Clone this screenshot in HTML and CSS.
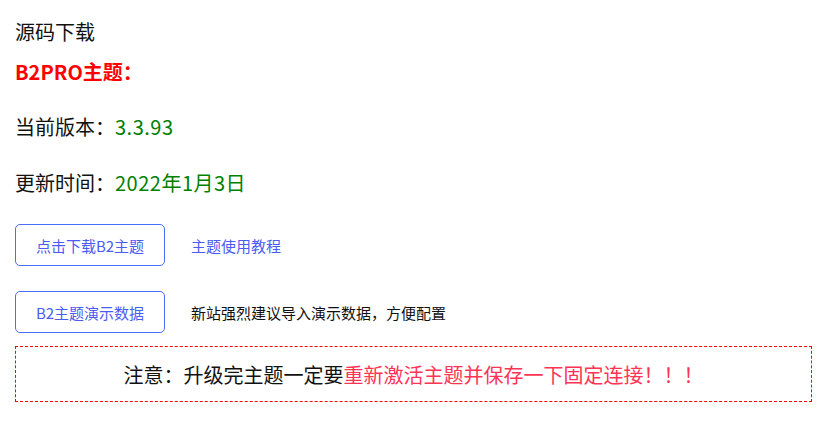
FILE: index.html
```html
<!DOCTYPE html>
<html lang="zh-CN">
<head>
    <meta charset="UTF-8">
    <meta name="viewport" content="width=device-width, initial-scale=1.0">
    <title>源码下载</title>
    <link rel="stylesheet" href="styles.css">
</head>
<body>
    <div class="content">
        <p class="title">源码下载</p>
        <h3 class="theme-name">B2PRO主题：</h3>
        <p class="info">当前版本：<span class="green">3.3.93</span></p>
        <p class="info">更新时间：<span class="green">2022年1月3日</span></p>

        <div class="row">
            <a class="btn" href="#">点击下载B2主题</a>
            <a class="link" href="#">主题使用教程</a>
        </div>
        <div class="row">
            <a class="btn" href="#">B2主题演示数据</a>
            <span class="tip">新站强烈建议导入演示数据，方便配置</span>
        </div>

        <div class="notice">注意：升级完主题一定要<span class="red">重新激活主题并保存一下固定连接！！！</span></div>
    </div>
</body>
</html>
```

FILE: styles.css
```css
body{
    margin: 0;
    font-family: "Noto Sans CJK SC", "Noto Sans", sans-serif;
    color: #111;
    background: #fff;
}
.content{
    padding: 17px 17px 0 15px;
}
.title{
    margin: 0;
    font-size: 20px;
    line-height: 30px;
}
.theme-name{
    margin: 10px 0 0 0;
    font-size: 20px;
    line-height: 30px;
    font-weight: bold;
    color: #ff0000;
}
.info{
    margin: 25px 0 0 0;
    font-size: 20px;
    line-height: 30px;
}
.info + .info{
    margin-top: 26px;
}
.green{
    color: #008000;
    letter-spacing: 0.5px;
}
.row{
    display: flex;
    align-items: center;
    gap: 26px;
    margin-top: 26px;
}
.row + .row{
    margin-top: 25px;
}
.btn{
    display: flex;
    align-items: center;
    justify-content: center;
    box-sizing: border-box;
    width: 150px;
    height: 42px;
    border: 1px solid #4a6cf7;
    border-radius: 5px;
    font-size: 15px;
    color: #4a5cf0;
    text-decoration: none;
}
.link{
    font-size: 15px;
    color: #4a5cf0;
    text-decoration: none;
}
.tip{
    font-size: 15px;
    color: #111;
}
.notice{
    margin-top: 13px;
    height: 56px;
    box-sizing: border-box;
    border: 1px dashed #ff0000;
    display: flex;
    align-items: center;
    justify-content: center;
    font-size: 20px;
    color: #111;
}
.red{
    color: #ff3355;
}
```
